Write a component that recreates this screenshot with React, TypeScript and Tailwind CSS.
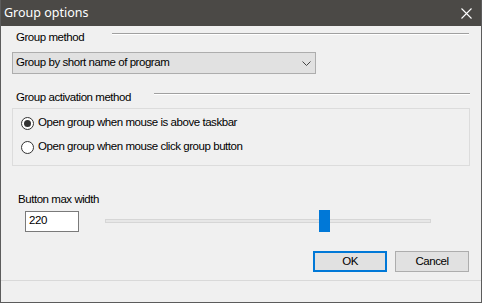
export default function App() {
  return (
    <div className="w-[482px] h-[303px] flex flex-col bg-[#f0f0f0] border-x border-b border-[#5c5c5c] font-['Liberation_Sans',Arial,sans-serif] text-[11.5px] tracking-[-0.45px] text-black overflow-hidden select-none">
      <div className="h-[26px] shrink-0 bg-[#4b4946] flex items-center justify-between pl-[3px] pr-[9px] text-white">
        <span className="font-['Noto_Sans',sans-serif] text-[12.5px] tracking-normal leading-none">Group options</span>
        <svg width="11" height="11" viewBox="0 0 11 11" className="mt-[1px]">
          <path d="M0.5 0.5 L10.5 10.5 M10.5 0.5 L0.5 10.5" stroke="#ffffff" strokeWidth="1.1" fill="none" />
        </svg>
      </div>

      <div className="flex-1 flex flex-col px-[11px]">
        <div className="mt-[4px] h-[14px] flex items-start">
          <span className="w-[100px] pl-[4px] leading-[14px]">Group method</span>
          <div className="flex-1 mt-[3px] mr-[1px] border-t border-b border-t-[#a0a0a0] border-b-white h-[2px]" />
        </div>

        <div className="mt-[8px] h-[22px] w-[304px] flex items-center justify-between bg-[#e1e1e1] border border-[#adadad] pl-[3px] pr-[4px]">
          <span>Group by short name of program</span>
          <svg width="9" height="5" viewBox="0 0 9 5">
            <path d="M0.5 0.5 L4.5 4.5 L8.5 0.5" stroke="#444" strokeWidth="1" fill="none" />
          </svg>
        </div>

        <div className="mt-[16px] h-[14px] flex items-start">
          <span className="w-[142px] pl-[4px] leading-[14px]">Group activation method</span>
          <div className="flex-1 mt-[3px] border-t border-b border-t-[#a0a0a0] border-b-white h-[2px]" />
        </div>

        <div className="mt-[4px] h-[58px] border border-[#dcdcdc] pt-[2px] pl-[8px]">
          <div className="h-[24px] flex items-center gap-[4px]">
            <span className="w-[13px] h-[13px] rounded-full border border-[#333] bg-white flex items-center justify-center">
              <span className="w-[7px] h-[7px] rounded-full bg-[#333]" />
            </span>
            <span>Open group when mouse is above taskbar</span>
          </div>
          <div className="h-[24px] flex items-center gap-[4px]">
            <span className="w-[13px] h-[13px] rounded-full border border-[#333] bg-white" />
            <span>Open group when mouse click group button</span>
          </div>
        </div>

        <div className="mt-[27px] h-[13px] pl-[6px] leading-[13px]">Button max width</div>

        <div className="mt-[4px] flex items-center pl-[13px]">
          <div className="w-[54px] h-[21px] bg-white border border-[#7a7a7a] pl-[3px] flex items-center">220</div>
          <div className="relative ml-[26px] w-[326px] h-[22px] flex items-center">
            <div className="w-full h-[4px] bg-[#e7e7e7] border border-[#d6d6d6]" />
            <div className="absolute left-[214px] top-0 w-[11px] h-[22px] bg-[#0078d7]" />
          </div>
        </div>

        <div className="mt-[19px] flex justify-end gap-[8px] pr-[1px]">
          <div className="w-[74px] h-[21px] bg-[#e1e1e1] border-2 border-[#0078d7] flex items-center justify-center">OK</div>
          <div className="w-[74px] h-[21px] bg-[#e1e1e1] border border-[#adadad] flex items-center justify-center">Cancel</div>
        </div>
      </div>

      <div className="h-[22px] shrink-0 border-t border-[#d9d9d9]" />
    </div>
  )
}
